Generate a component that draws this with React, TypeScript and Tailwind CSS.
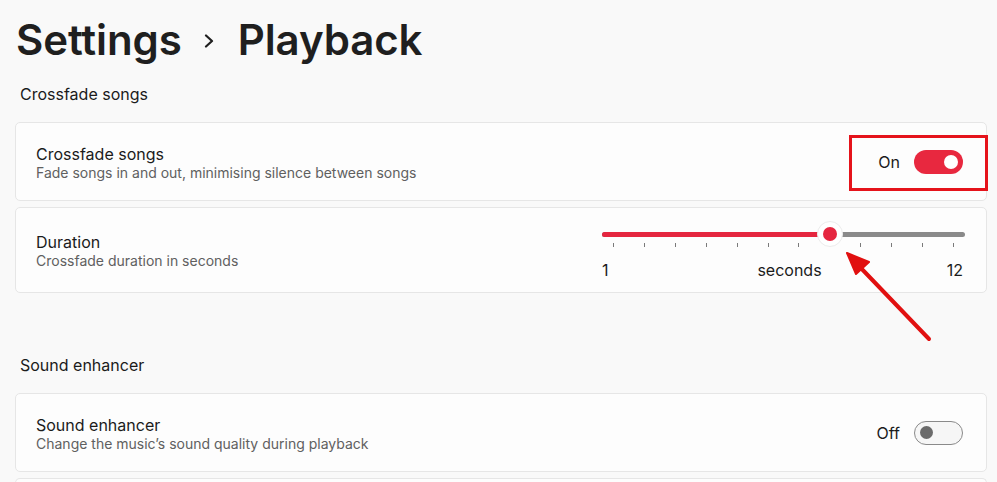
import React from "react";

const font = { fontFamily: "Inter, 'Noto Sans', 'Liberation Sans', sans-serif" };

function Toggle({ on }: { on: boolean }) {
  if (on) {
    return (
      <div className="flex h-[24px] w-[49px] items-center justify-end rounded-full bg-[#e8283f] pr-[5px]">
        <div className="h-[14px] w-[14px] rounded-full bg-white" />
      </div>
    );
  }
  return (
    <div className="flex h-[24px] w-[49px] items-center rounded-full border border-[#8a8a8a] bg-[#f6f6f6] pl-[5px]">
      <div className="h-[13px] w-[13px] rounded-full bg-[#6b6b6b]" />
    </div>
  );
}

function RowText({ title, sub }: { title: string; sub: string }) {
  return (
    <div className="flex flex-col pt-[3px]">
      <span className="text-[16px] leading-[20px] text-[#1b1b1b]">{title}</span>
      <span className="text-[14px] leading-[18px] text-[#606060]">{sub}</span>
    </div>
  );
}

function DurationSlider() {
  const ticks = Array.from({ length: 12 });
  const value = 8;
  // thumb centre, measured from the left end of the track
  const pos = 11 + ((value - 1) / 11) * 341;
  return (
    <div className="w-[363px]">
      <div className="relative h-[26px]">
        <div className="absolute left-0 right-0 top-[11px] h-[5px] rounded-full bg-[#8a8a8a]" />
        <div
          className="absolute left-0 top-[11px] h-[5px] rounded-full bg-[#e5263f]"
          style={{ width: pos }}
        />
        <div
          className="absolute top-0 flex h-[26px] w-[26px] items-center justify-center rounded-full border border-[#ececec] bg-white"
          style={{ left: pos - 13 }}
        >
          <div className="h-[14px] w-[14px] rounded-full bg-[#e5263f]" />
        </div>
      </div>
      <div className="mt-[-4px] flex h-[4px] justify-between px-[11px]">
        {ticks.map((_, i) => (
          <div key={i} className={i === value - 1 ? "w-px" : "w-px bg-[#7a7a7a]"} />
        ))}
      </div>
      <div className="mt-[11px] grid grid-cols-[1fr_auto_1fr] text-[16px] leading-[24px] text-[#1b1b1b]">
        <span>1</span>
        <span className="pl-[12px]">seconds</span>
        <span className="text-right pr-[2px]">12</span>
      </div>
    </div>
  );
}

export default function App() {
  return (
    <div className="relative h-[482px] w-full overflow-hidden bg-[#f9f9f9]" style={font}>
      <div className="pl-[15px] pr-[10px] pt-[14px]">
        <h1 className="flex items-center pl-[1px] text-[42px] font-semibold leading-[52px] tracking-[-0.1px] text-[#1f1f1f]">
          <span>Settings</span>
          <svg width="10" height="14" viewBox="0 0 10 14" className="ml-[22px] mr-[24px] mt-[2px]">
            <polyline points="2,1.5 8,7 2,12.5" fill="none" stroke="#1f1f1f" strokeWidth="2.2" strokeLinecap="round" strokeLinejoin="round" />
          </svg>
          <span>Playback</span>
        </h1>

        <div className="mt-[16px] pl-[5px] text-[16px] leading-[24px] text-[#1b1b1b]">Crossfade songs</div>

        <div className="mt-[16px] flex h-[79px] items-center justify-between rounded-[5px] border border-[#e6e6e6] bg-[#fdfdfd] pl-[20px] pr-[23px]">
          <RowText title="Crossfade songs" sub="Fade songs in and out, minimising silence between songs" />
          <div className="flex items-center gap-[14px]">
            <span className="text-[16px] text-[#1b1b1b]">On</span>
            <Toggle on />
          </div>
        </div>

        <div className="mt-[6px] flex h-[86px] items-start justify-between rounded-[5px] border border-[#e6e6e6] bg-[#fdfdfd] pl-[20px] pr-[21px] pt-[13px]">
          <div className="pt-[8px]">
            <RowText title="Duration" sub="Crossfade duration in seconds" />
          </div>
          <DurationSlider />
        </div>

        <div className="mt-[60px] pl-[5px] text-[16px] leading-[24px] text-[#1b1b1b]">Sound enhancer</div>

        <div className="mt-[16px] flex h-[79px] items-center justify-between rounded-[5px] border border-[#e6e6e6] bg-[#fdfdfd] pl-[20px] pr-[23px]">
          <RowText title="Sound enhancer" sub="Change the music’s sound quality during playback" />
          <div className="flex items-center gap-[14px]">
            <span className="text-[16px] text-[#1b1b1b]">Off</span>
            <Toggle on={false} />
          </div>
        </div>

        <div className="mt-[6px] h-[20px] rounded-t-[5px] border border-b-0 border-[#e6e6e6] bg-[#fdfdfd]" />
      </div>

      {/* annotation: highlight box around the toggle */}
      <div className="pointer-events-none absolute left-[849px] top-[135px] h-[56px] w-[139px] border-[3px] border-[#e5131b]" />

      {/* annotation: arrow pointing at the slider thumb */}
      <svg className="pointer-events-none absolute left-0 top-0" width="997" height="482">
        <line x1="929" y1="339" x2="858" y2="265" stroke="#e11010" strokeWidth="4" strokeLinecap="round" />
        <polygon points="847,253 869,262 856,274" fill="#e11010" stroke="#e11010" strokeWidth="2" strokeLinejoin="round" />
      </svg>
    </div>
  );
}
